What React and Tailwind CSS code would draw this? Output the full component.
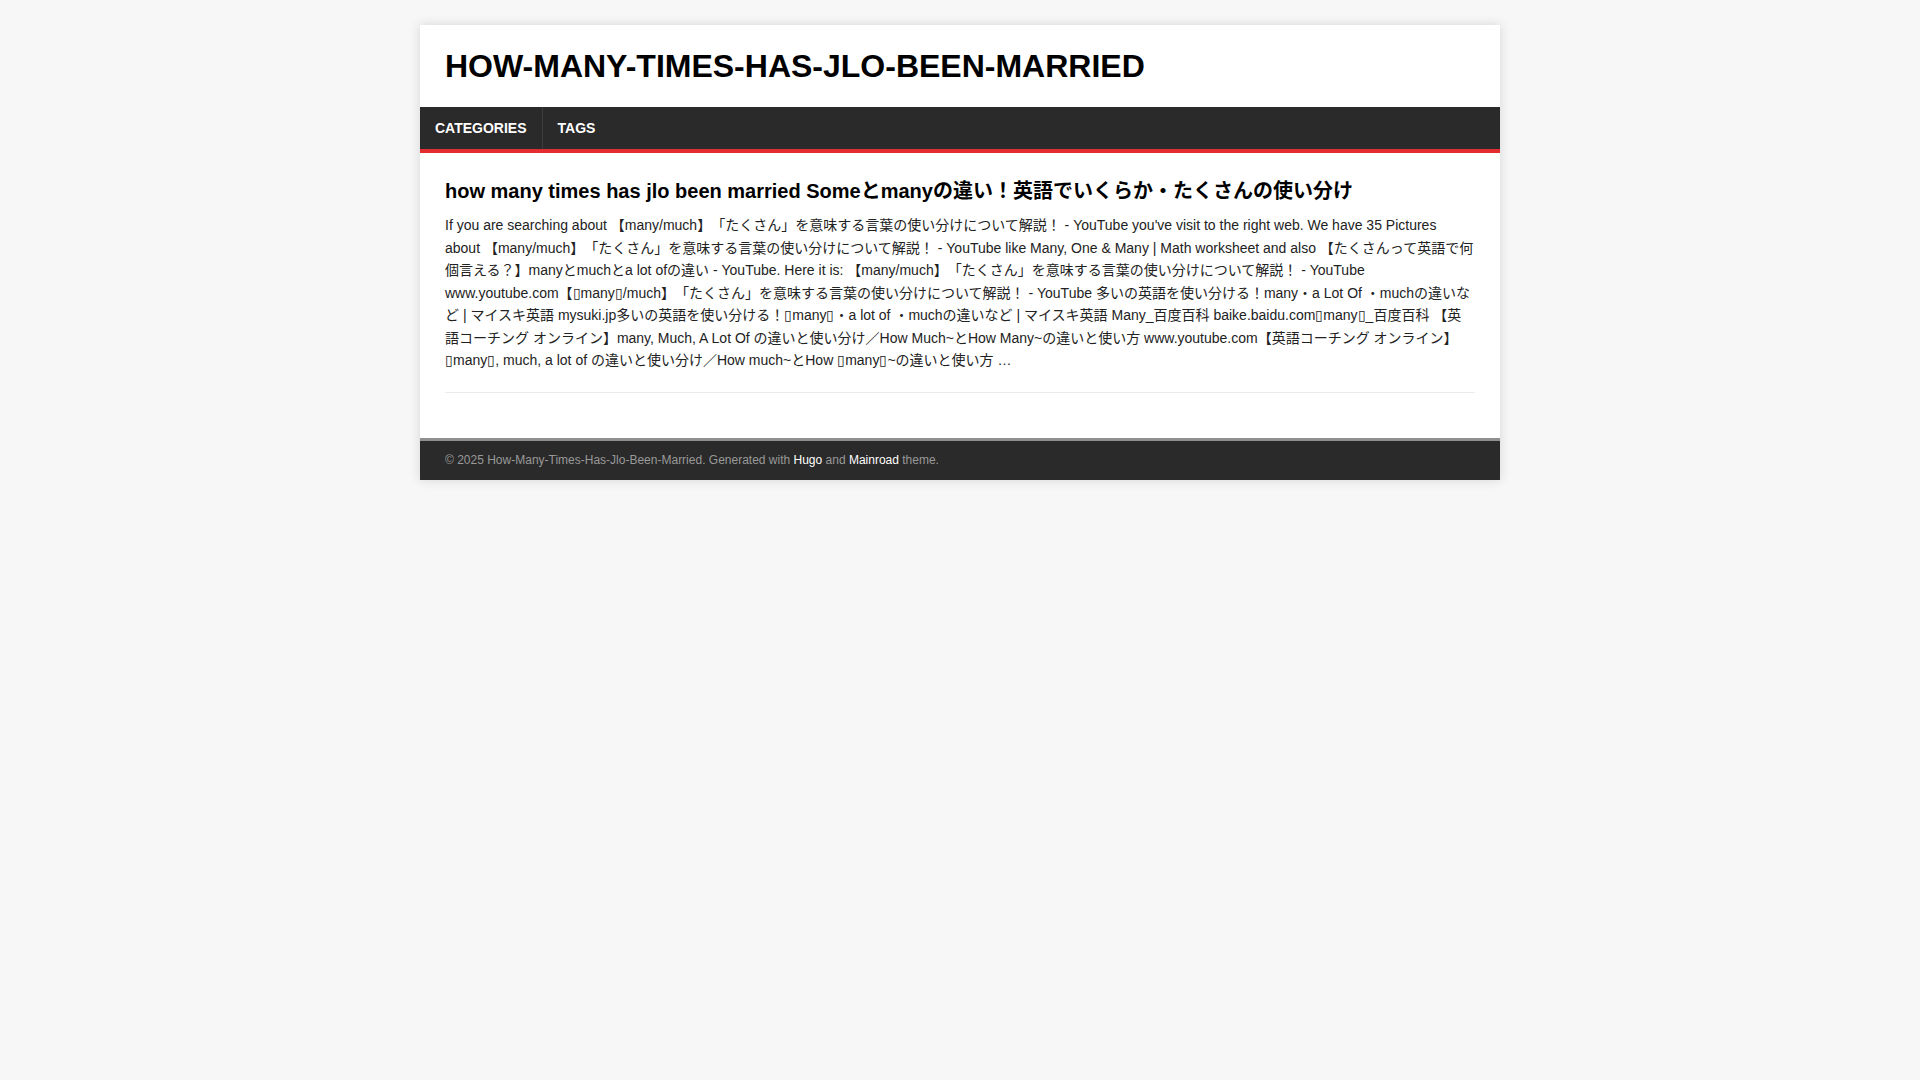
import React from 'react'

const font = { fontFamily: '"Liberation Sans", "Noto Sans CJK JP", sans-serif' }

const App = () => {
  return (
    <div className="min-h-screen bg-[#f7f7f7] pt-[25px] pb-[25px] text-black [text-spacing-trim:space-all]" style={font}>
      <div className="mx-auto w-[1080px] bg-white shadow-[0_0_10px_rgba(50,50,50,0.17)]">
        {/* header */}
        <header className="p-[25px]">
          <a className="block text-[32px] font-bold uppercase leading-[32px] text-black">
            How-Many-Times-Has-Jlo-Been-Married
          </a>
        </header>

        {/* menu */}
        <nav className="flex bg-[#2a2a2a] border-b-4 border-[#e22d30]">
          <a className="block px-[15px] py-[10px] text-[14px] font-bold uppercase leading-[22px] text-white">
            Categories
          </a>
          <a className="block border-l border-[#3d3d3d] px-[15px] py-[10px] text-[14px] font-bold uppercase leading-[22px] text-white">
            Tags
          </a>
        </nav>

        {/* main */}
        <main className="p-[25px]">
          <article className="mb-[20px] border-b border-[#ebebeb] pb-[20px]">
            <h2 className="mb-[10px] text-[20px] font-bold leading-[26px]">
              how many times has jlo been married Someとmanyの違い！英語でいくらか・たくさんの使い分け
            </h2>
            <p className="text-[14px] leading-[22.5px] text-[#222]">
              If you are searching about 【many/much】「たくさん」を意味する言葉の使い分けについて解説！ - YouTube you've visit to the right web. We have 35 Pictures about 【many/much】「たくさん」を意味する言葉の使い分けについて解説！ - YouTube like Many, One &amp; Many | Math worksheet and also 【たくさんって英語で何個言える？】manyとmuchとa lot ofの違い - YouTube. Here it is: 【many/much】「たくさん」を意味する言葉の使い分けについて解説！ - YouTube www.youtube.com【▯many▯/much】「たくさん」を意味する言葉の使い分けについて解説！ - YouTube 多いの英語を使い分ける！many・a Lot Of ・muchの違いなど | マイスキ英語 mysuki.jp多いの英語を使い分ける！▯many▯・a lot of ・muchの違いなど | マイスキ英語 Many_百度百科 baike.baidu.com▯many▯_百度百科 【英語コーチング オンライン】many, Much, A Lot Of の違いと使い分け／How Much~とHow Many~の違いと使い方 www.youtube.com【英語コーチング オンライン】▯many▯, much, a lot of の違いと使い分け／How much~とHow ▯many▯~の違いと使い方 …
            </p>
          </article>
        </main>

        {/* footer */}
        <footer className="border-t-[3px] border-[#8f8f8f] bg-[#2a2a2a] px-[25px] py-[10px] text-[12px] leading-[19px] text-[#999]">
          © 2025 How-Many-Times-Has-Jlo-Been-Married. Generated with <a className="text-white">Hugo</a> and <a className="text-white">Mainroad</a> theme.
        </footer>
      </div>
    </div>
  )
}

export default App
